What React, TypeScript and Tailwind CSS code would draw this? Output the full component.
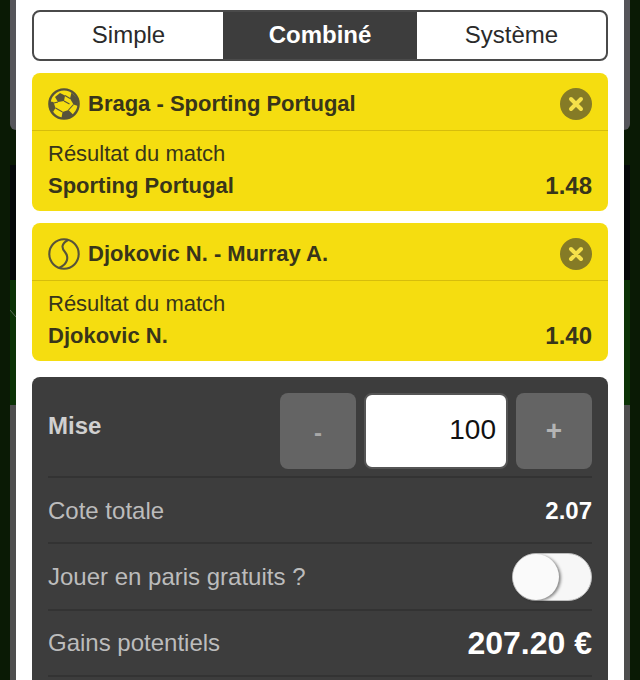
const FONT = "font-['Liberation_Sans',Arial,sans-serif]";

const SoccerIcon = () => (
  <svg viewBox="0 0 32 32" className="w-8 h-8 shrink-0">
    <circle cx="16" cy="16" r="14.6" fill="none" stroke="#57533a" strokeWidth="2.4" />
    <path d="M12 5 L17 7.5 L16 13 L10 14 L7 9 Z" fill="#57533a" />
    <path d="M23.5 4.5 L29.5 10.5 L30 18 L25.5 16.5 L22 10.5 Z" fill="#57533a" />
    <path d="M2 13.5 L5.5 14 L7.5 20 L5 24 L2 20 Z" fill="#57533a" />
    <path d="M14.5 24 L20.5 22 L25 26.5 L20 30.5 L13.5 30 Z" fill="#57533a" />
    <g stroke="#57533a" strokeWidth="1.1" fill="none">
      <path d="M17 7.5 L22 10.5" />
      <path d="M10 14 L6 15" />
      <path d="M7.5 20 L14.5 24" />
      <path d="M25.5 16.5 L20.5 22" />
      <path d="M16 13 L21.5 16" />
    </g>
  </svg>
);

const TennisIcon = () => (
  <svg viewBox="0 0 32 32" className="w-8 h-8 shrink-0">
    <circle cx="16" cy="16" r="14.7" fill="none" stroke="#57533a" strokeWidth="2.1" />
    <path
      d="M20 2 C13 6 13.5 10 17 14 C21 19 20 26 11 30"
      fill="none"
      stroke="#57533a"
      strokeWidth="2.1"
    />
  </svg>
);

const CloseIcon = () => (
  <div className="ml-auto w-8 h-8 rounded-full bg-[#857b26] flex items-center justify-center">
    <svg viewBox="0 0 16 16" className="w-4 h-4">
      <path d="M3 3 L13 13 M13 3 L3 13" stroke="#f5e04a" strokeWidth="4" strokeLinecap="round" />
    </svg>
  </div>
);

const BetCard = ({
  icon,
  title,
  pick,
  odds,
}: {
  icon: React.ReactNode;
  title: string;
  pick: string;
  odds: string;
}) => (
  <div className="rounded-lg bg-[#f5dd10] text-[#38351a] h-[138px] flex flex-col">
    <div className="h-[58px] shrink-0 flex items-center px-4 pt-[4px] border-b border-[#d6bd0c]">
      {icon}
      <span className="ml-2 text-[22px] font-bold leading-none">{title}</span>
      <CloseIcon />
    </div>
    <div className="px-4 pt-[7px]">
      <div className="text-[22px] leading-[32px]">Résultat du match</div>
      <div className="flex justify-between items-center leading-[32px] font-bold text-[22px]">
        <span className="-mt-[1px]">{pick}</span>
        <span className="text-[24px]">{odds}</span>
      </div>
    </div>
  </div>
);

const Row = ({ children, className }: { children: React.ReactNode; className: string }) => (
  <div className={`flex items-center justify-between border-b-2 border-[#333333] ${className}`}>
    {children}
  </div>
);

const BackdropEdge = ({ side }: { side: "left" | "right" }) => (
  <div className={`w-4 shrink-0 flex flex-col ${side === "left" ? "items-end" : "items-start"}`}>
    <div className={`w-[6px] h-[130px] bg-[#55555a] ${side === "left" ? "rounded-bl-md" : "rounded-br-md"}`} />
    <div className="w-[6px] h-[35px]" />
    <div className="w-[6px] h-[115px] bg-[#05080a]" />
    <div className="w-[6px] h-[125px] bg-[#0c3306] overflow-hidden">
      {side === "left" && (
        <svg viewBox="0 0 6 125" className="w-[6px] h-[125px]">
          <path d="M0 30 L6 37" stroke="#5a6a58" strokeWidth="1" />
        </svg>
      )}
    </div>
    <div className="w-[6px] h-[275px] bg-[#4e4e4e]" />
  </div>
);

const App = () => {
  return (
    <div className={`w-[640px] h-[680px] overflow-hidden flex bg-[#0a1a05] ${FONT}`}>
      <BackdropEdge side="left" />

      <div className="w-[608px] shrink-0 bg-white px-4 pt-[10px]">
        <div className="h-[51px] flex rounded-lg border-2 border-[#4a4a4a] overflow-hidden text-[24px] leading-none text-[#2a2a2a]">
          <div className="w-[189px] flex items-center justify-center pb-[2px]">Simple</div>
          <div className="w-[194px] flex items-center justify-center pb-[2px] bg-[#3d3d3d] text-white font-bold">
            Combiné
          </div>
          <div className="flex-1 flex items-center justify-center pb-[2px]">Système</div>
        </div>

        <div className="mt-3 flex flex-col gap-3">
          <BetCard
            icon={<SoccerIcon />}
            title="Braga - Sporting Portugal"
            pick="Sporting Portugal"
            odds="1.48"
          />
          <BetCard icon={<TennisIcon />} title="Djokovic N. - Murray A." pick="Djokovic N." odds="1.40" />
        </div>

        <div className="mt-4 h-[320px] rounded-t-lg bg-[#3d3d3d] px-4 pt-4 text-[24px] text-[#bcbcbc]">
          <Row className="h-[85px] items-start">
            <span className="font-bold text-[#d0d0d0] mt-[15px]">Mise</span>
            <div className="flex gap-2">
              <button className="w-[76px] h-[76px] rounded-lg bg-[#646464] text-[#a8a8a8] font-bold pt-[4px]">-</button>
              <div className="w-[144px] h-[76px] rounded-lg bg-white border-2 border-[#555555] flex items-center justify-end px-[10px] pb-[2px] text-[#111111] text-[28px]">
                100
              </div>
              <button className="w-[76px] h-[76px] rounded-lg bg-[#646464] text-[#b4b4b4] font-bold text-[28px]">+</button>
            </div>
          </Row>
          <Row className="h-[66px] pt-[2px]">
            <span>Cote totale</span>
            <span className="font-bold text-white">2.07</span>
          </Row>
          <Row className="h-[67px]">
            <span>Jouer en paris gratuits ?</span>
            <div className="relative w-[80px] h-[48px] rounded-full bg-[#f7f7f7] border border-[#bdbdbd]">
              <div className="absolute left-0 top-0 w-[46px] h-[46px] rounded-full bg-[#fafafa] shadow-[2px_1px_3px_rgba(0,0,0,0.45)]" />
            </div>
          </Row>
          <Row className="h-[66px]">
            <span>Gains potentiels</span>
            <span className="font-bold text-white text-[32px]">207.20 €</span>
          </Row>
        </div>
      </div>

      <BackdropEdge side="right" />
    </div>
  );
};

export default App;
